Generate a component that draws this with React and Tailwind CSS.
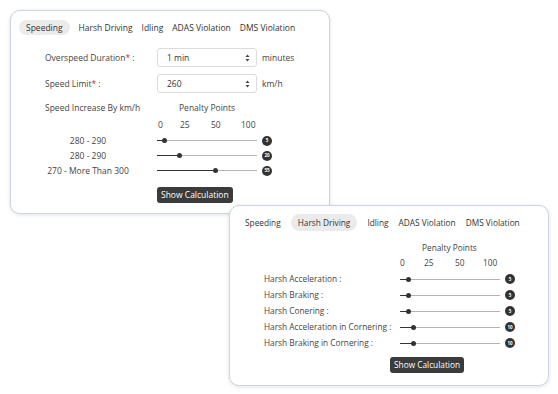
import React from "react";

const tabs = ["Speeding", "Harsh Driving", "Idling", "ADAS Violation", "DMS Violation"];

const Tabs = ({ active, gap, pill }) => (
  <div className={`flex items-center ${gap}`}>
    {tabs.map((t) => (
      <div
        key={t}
        className={
          t === active
            ? `px-[7px] ${pill} flex items-center rounded-full bg-[#ebebeb] text-[#333]`
            : `${pill} flex items-center text-[#333]`
        }
      >
        {t}
      </div>
    ))}
  </div>
);

const Arrows = () => (
  <svg width="5" height="8" viewBox="0 0 5 8">
    <path d="M2.5 0.5 L4.5 3 L0.5 3 Z" fill="#444" />
    <path d="M2.5 7.5 L4.5 5 L0.5 5 Z" fill="#444" />
  </svg>
);

const SelectRow = ({ label, value, unit }) => (
  <div className="flex items-center h-[19px]">
    <div className="w-[112px] text-[#444]">
      {label}
      <span className="text-[#e02424]">*</span> :
    </div>
    <div className="w-[100px] h-[19px] border border-[#dcdcdc] rounded-[3px] flex items-center justify-between pl-[9px] pr-[6px] text-[#333]">
      <span>{value}</span>
      <Arrows />
    </div>
    <div className="ml-[5px] text-[#444]">{unit}</div>
  </div>
);

const Slider = ({ pct, badge }) => (
  <div className="flex items-center">
    <div className="relative w-[100px] h-[8px] flex items-center">
      <div className="w-full h-px bg-[#b3b3b3]" />
      <div className="absolute left-0 top-[3.5px] h-px bg-[#333]" style={{ width: `${pct}%` }} />
      <div
        className="absolute top-[1.5px] w-[5px] h-[5px] rounded-full bg-[#333]"
        style={{ left: `calc(${pct}% - 2.5px)` }}
      />
    </div>
    <div className="ml-[5px] w-[10px] h-[10px] rounded-full bg-[#333] text-white text-[4.5px] font-bold flex items-center justify-center leading-none">
      {badge}
    </div>
  </div>
);

const Scale = ({ widths }) => (
  <div className="flex h-[10px] items-center text-[#444]">
    <span className={widths[0]}>0</span>
    <span className={widths[1]}>25</span>
    <span className={widths[2]}>50</span>
    <span>100</span>
  </div>
);

const Button = () => (
  <div className="h-[16px] px-[4px] rounded-[3px] bg-[#3b3b3b] text-white flex items-center">
    Show Calculation
  </div>
);

const speedRows = [
  { label: "280 - 290", pct: 7, badge: "5" },
  { label: "280 - 290", pct: 22, badge: "20" },
  { label: "270 - More Than 300", pct: 58, badge: "55" },
];

const harshRows = [
  { label: "Harsh Acceleration :", pct: 8, badge: "5" },
  { label: "Harsh Braking :", pct: 8, badge: "5" },
  { label: "Harsh Conering :", pct: 8, badge: "5" },
  { label: "Harsh Acceleration in Cornering :", pct: 13, badge: "10" },
  { label: "Harsh Braking in Cornering :", pct: 13, badge: "10" },
];

export default function App() {
  return (
    <div
      className="w-[558px] h-[394px] bg-white overflow-hidden pt-[10px] pl-[10px] text-[8.5px] leading-[10px]"
      style={{ fontFamily: '"Open Sans", "Noto Sans", sans-serif' }}
    >
      {/* Speeding card */}
      <div className="w-[320px] h-[204px] border border-[#c9d6e3] rounded-[10px] bg-white shadow-[0_1px_4px_rgba(0,0,0,0.12)] pt-[9px] pl-[8px]">
        <Tabs active="Speeding" gap="gap-[9px]" pill="h-[15px]" />
        <div className="pl-[26px] mt-[13px] flex flex-col gap-[7px]">
          <SelectRow label="Overspeed Duration" value="1 min" unit="minutes" />
          <SelectRow label="Speed Limit" value="260" unit="km/h" />
        </div>
        <div className="pl-[26px] mt-[10px] flex text-[#444]">
          <div className="w-[134px]">Speed Increase By km/h</div>
          <div>Penalty Points</div>
        </div>
        <div className="pl-[138px] mt-[7px]">
          <Scale widths={["w-[23px] pl-px", "w-[31px]", "w-[30px]"]} />
        </div>
        <div className="pl-[26px] mt-[3px] flex flex-col">
          {speedRows.map((r, i) => (
            <div key={i} className="flex items-center h-[15px]">
              <div className="w-[86px] text-center text-[#444]">{r.label}</div>
              <div className="ml-[26px]">
                <Slider pct={r.pct} badge={r.badge} />
              </div>
            </div>
          ))}
        </div>
        <div className="pl-[138px] mt-[9px] flex">
          <Button />
        </div>
      </div>

      {/* Harsh driving card */}
      <div className="relative ml-[219px] -mt-[9px] w-[320px] h-[181px] border border-[#c9d6e3] rounded-[10px] bg-white shadow-[0_1px_4px_rgba(0,0,0,0.12)] pt-[8px] pl-[15px] text-[8.3px]">
        <Tabs active="Harsh Driving" gap="gap-[10px]" pill="h-[17px]" />
        <div className="pl-[177px] mt-[12px] text-[#444] h-[10px]">Penalty Points</div>
        <div className="pl-[154px] mt-[5px]">
          <Scale widths={["w-[25px] pl-px", "w-[31px]", "w-[28px]"]} />
        </div>
        <div className="pl-[19px] mt-[3px] flex flex-col">
          {harshRows.map((r, i) => (
            <div key={i} className="flex items-center h-[16px]">
              <div className="w-[136px] text-[#444]">{r.label}</div>
              <Slider pct={r.pct} badge={r.badge} />
            </div>
          ))}
        </div>
        <div className="pl-[145px] mt-[6px] flex">
          <Button />
        </div>
      </div>
    </div>
  );
}
